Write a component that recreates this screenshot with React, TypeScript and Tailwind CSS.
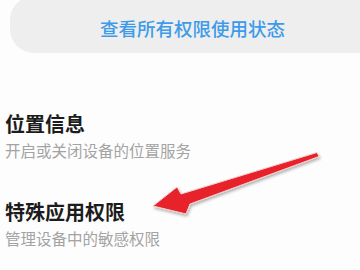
import React from 'react';

const font = { fontFamily: '"Noto Sans CJK SC", "Noto Sans", sans-serif' };

const Row: React.FC<{ title: string; desc: string; className?: string }> = ({ title, desc, className }) => (
  <div className={className}>
    <div className="text-[20px] leading-[26px] font-bold text-[#1c1c1c]">{title}</div>
    <div className="mt-[2px] text-[15.5px] leading-[22px] text-[#a3a3a3]">{desc}</div>
  </div>
);

const App: React.FC = () => {
  return (
    <div className="relative w-[360px] h-[270px] overflow-hidden bg-[#fdfdfd]" style={font}>
      <div className="ml-[10px] -mt-[4px] w-[380px] h-[57px] rounded-[24px] bg-[#eeeeee] flex items-center pt-[8px]">
        <span className="ml-[90px] text-[18.5px] font-medium text-[#3d9be9]">查看所有权限使用状态</span>
      </div>

      <div className="pl-[5px]">
        <Row title="位置信息" desc="开启或关闭设备的位置服务" className="mt-[58px]" />
        <Row title="特殊应用权限" desc="管理设备中的敏感权限" className="mt-[38px]" />
      </div>

      {/* red annotation arrow */}
      <svg className="absolute left-0 top-0 pointer-events-none" width="360" height="270" viewBox="0 0 360 270">
        <defs>
          <filter id="sh" x="-10%" y="-30%" width="120%" height="160%">
            <feDropShadow dx="1" dy="2" stdDeviation="1.5" floodColor="#000" floodOpacity="0.3" />
          </filter>
        </defs>
        <polygon
          points="153,206 177,187 181,194 317,152.5 319,156.5 190,204 186,214"
          fill="#e8242b"
          stroke="#f6d0d0"
          strokeWidth="1"
          strokeLinejoin="round"
          filter="url(#sh)"
        />
      </svg>
    </div>
  );
};

export default App;
